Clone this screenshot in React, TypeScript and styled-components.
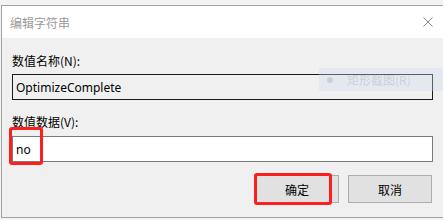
import React from 'react'
import styled, { createGlobalStyle } from 'styled-components'

const GlobalStyle = createGlobalStyle`
  html, body {
    margin: 0;
    padding: 0;
    background: #f3f3f3;
  }
  body {
    font-family: "Noto Sans", "Noto Sans CJK SC", sans-serif;
    font-size: 12px;
    color: #000;
  }
`

const Screen = styled.div`
  position: relative;
  width: 443px;
  height: 220px;
  padding: 5px 0 0 1px;
  box-sizing: border-box;
  overflow: hidden;
`

const Window = styled.div`
  width: 442px;
  height: 213px;
  box-sizing: border-box;
  border: 1px solid #a3a3a3;
  border-right: none;
  display: flex;
  flex-direction: column;
  background: #f0f0f0;
`

const TitleBar = styled.div`
  height: 32px;
  flex: none;
  background: #fff;
  display: flex;
  align-items: center;
  justify-content: space-between;
  padding: 0 10px 0 8px;
`

const Title = styled.span`
  font-family: "Noto Sans CJK SC", sans-serif;
  font-size: 12px;
  color: #9a9a9a;
  padding-top: 1px;
`

const CloseButton = styled.button`
  width: 10px;
  height: 10px;
  padding: 0;
  border: none;
  background: none;
  display: flex;
  margin-right: 0;
`

const Body = styled.div`
  flex: 1;
  display: flex;
  flex-direction: column;
  padding: 15px 10px 0 10px;
`

const Label = styled.label<{ top?: number }>`
  display: block;
  height: 16px;
  line-height: 16px;
  margin-top: ${({ top }) => top || 0}px;
  font-family: "Noto Sans CJK SC", sans-serif;
  font-size: 12px;
`

const FieldWrap = styled.div<{ top: number }>`
  position: relative;
  margin-top: ${({ top }) => top}px;
`

const Field = styled.div<{ readOnly?: boolean }>`
  height: 26px;
  box-sizing: border-box;
  border: 1px solid ${({ readOnly }) => (readOnly ? '#1c1c1c' : '#7a7a7a')};
  background: ${({ readOnly }) => (readOnly ? '#f0f0f0' : '#fff')};
  display: flex;
  align-items: center;
  padding-left: 3px;
  font-size: 12px;
`

const Buttons = styled.div`
  display: flex;
  justify-content: flex-end;
  gap: 9px;
  margin-top: 13px;
  padding-right: 1px;
`

const ButtonWrap = styled.div`
  position: relative;
`

const DialogButton = styled.button`
  width: 84px;
  height: 28px;
  box-sizing: border-box;
  border: 1px solid #adadad;
  background: #e1e1e1;
  font-family: "Noto Sans CJK SC", sans-serif;
  font-size: 12px;
  color: #000;
  padding: 0;
`

const Highlight = styled.div<{ left: number; top: number; w: number; h: number }>`
  position: absolute;
  left: ${({ left }) => left}px;
  top: ${({ top }) => top}px;
  width: ${({ w }) => w}px;
  height: ${({ h }) => h}px;
  box-sizing: border-box;
  border: 3px solid #fb1f1f;
  border-radius: 3px;
  pointer-events: none;
`

const Ghost = styled.div`
  position: absolute;
  left: 319px;
  top: 68px;
  width: 130px;
  height: 23px;
  background: rgba(205, 220, 240, 0.35);
  display: flex;
  align-items: center;
  padding-left: 8px;
  gap: 14px;
  font-family: "Noto Sans CJK SC", sans-serif;
  font-size: 12px;
  color: rgba(150, 160, 175, 0.35);
  pointer-events: none;
`

const GhostDot = styled.span`
  width: 6px;
  height: 6px;
  border-radius: 50%;
  background: rgba(150, 160, 175, 0.35);
`

export default function App() {
  return (
    <>
      <GlobalStyle />
      <Screen>
        <Window>
          <TitleBar>
            <Title>编辑字符串</Title>
            <CloseButton aria-label="close">
              <svg width="10" height="10" viewBox="0 0 10 10">
                <path d="M0.5 0.5 L9.5 9.5 M9.5 0.5 L0.5 9.5" stroke="#8a8a8a" strokeWidth="1" fill="none" />
              </svg>
            </CloseButton>
          </TitleBar>
          <Body>
            <Label>数值名称(N):</Label>
            <FieldWrap top={5}>
              <Field readOnly>OptimizeComplete</Field>
            </FieldWrap>
            <Label top={14}>数值数据(V):</Label>
            <FieldWrap top={6}>
              <Field>no</Field>
              <Highlight left={-3} top={-9} w={34} h={38} />
            </FieldWrap>
            <Buttons>
              <ButtonWrap>
                <DialogButton>确定</DialogButton>
                <Highlight left={-1} top={-2} w={78} h={32} />
              </ButtonWrap>
              <DialogButton>取消</DialogButton>
            </Buttons>
          </Body>
        </Window>
        <Ghost>
          <GhostDot />
          <span>矩形截图(R)</span>
        </Ghost>
      </Screen>
    </>
  )
}
